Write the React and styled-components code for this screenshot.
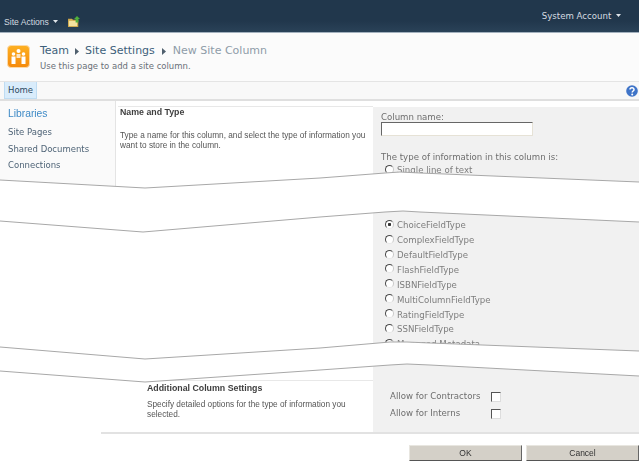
import React from 'react';
import styled, { createGlobalStyle } from 'styled-components';

const fieldTypes = [
  { label: 'External Data' },
  { label: 'ChoiceFieldType', checked: true },
  { label: 'ComplexFieldType' },
  { label: 'DefaultFieldType' },
  { label: 'FlashFieldType' },
  { label: 'ISBNFieldType' },
  { label: 'MultiColumnFieldType' },
  { label: 'RatingFieldType' },
  { label: 'SSNFieldType' },
  { label: 'Managed Metadata' },
];

const navLinks = ['Site Pages', 'Shared Documents', 'Connections'];

const tears = [
  {
    top: '0,180 145,188 320,178 385,173 400,172 420,173 639,182',
    bottom: '639,222 420,212 403,211 385,212 320,217 143,232 0,221',
  },
  {
    top: '0,347 145,359 320,348 390,342 407,342 430,343 639,351',
    bottom: '639,376 430,365 407,364 390,365 320,370 145,382 0,371',
  },
];

const App = () => (
  <Page>
    <GlobalStyle />
    <TopBar>
      <SiteActions>
        Site Actions <Caret />
        <FolderIcon />
      </SiteActions>
      <Account>
        System Account <Caret />
      </Account>
    </TopBar>

    <TitleRow>
      <TeamIcon />
      <div>
        <Breadcrumb>
          <a>Team</a>
          <Arrow />
          <a>Site Settings</a>
          <Arrow />
          <span>New Site Column</span>
        </Breadcrumb>
        <Subtitle>Use this page to add a site column.</Subtitle>
      </div>
    </TitleRow>

    <Ribbon>
      <HomeTab>Home</HomeTab>
      <HelpIcon />
    </Ribbon>

    <Section>
      <LeftPart>
        <Nav>
          <NavHeading>Libraries</NavHeading>
          {navLinks.map((link) => (
            <NavLink key={link}>{link}</NavLink>
          ))}
        </Nav>
        <Description>
          <h3>Name and Type</h3>
          <p>Type a name for this column, and select the type of information you want to store in the column.</p>
        </Description>
      </LeftPart>
      <Panel>
        <FieldLabel>Column name:</FieldLabel>
        <NameInput type="text" />
        <TypeLabel>The type of information in this column is:</TypeLabel>
        <RadioRow>
          <Radio type="radio" name="first" readOnly />
          Single line of text
        </RadioRow>
        <RadioList>
          {fieldTypes.map((type) => (
            <RadioRow key={type.label}>
              <Radio type="radio" name="type" defaultChecked={type.checked} />
              {type.label}
            </RadioRow>
          ))}
        </RadioList>
      </Panel>
    </Section>

    <LastSection>
      <SettingsText>
        <h3>Additional Column Settings</h3>
        <p>Specify detailed options for the type of information you selected.</p>
      </SettingsText>
      <SettingsPanel>
        <CheckRow>
          <span>Allow for Contractors</span>
          <Check type="checkbox" />
        </CheckRow>
        <CheckRow>
          <span>Allow for Interns</span>
          <Check type="checkbox" />
        </CheckRow>
      </SettingsPanel>
    </LastSection>

    <Footer>
      <FormButton>OK</FormButton>
      <FormButton>Cancel</FormButton>
    </Footer>

    <TearLayer viewBox="0 0 639 475">
      {tears.map((tear) => (
        <g key={tear.top}>
          <polygon points={`${tear.top} ${tear.bottom}`} fill="#fff" />
          <polyline points={tear.top} fill="none" stroke="#a8a8a8" />
          <polyline points={tear.bottom} fill="none" stroke="#a8a8a8" />
        </g>
      ))}
    </TearLayer>
  </Page>
);

const Caret = () => (
  <svg width="5" height="3" viewBox="0 0 5 3" style={{ marginLeft: 2, verticalAlign: 2 }}>
    <path d="M0 0h5L2.5 3z" fill="#dfe5ea" />
  </svg>
);

const Arrow = () => (
  <svg width="4" height="7" viewBox="0 0 4 7">
    <path d="M0 0l4 3.5L0 7z" fill="#50606e" />
  </svg>
);

const FolderIcon = () => (
  <FolderSvg width="12" height="11" viewBox="0 0 12 11">
    <path d="M0 3h4l1 1h5v7H0z" fill="#d9b65c" stroke="#b8963c" strokeWidth=".6" />
    <path d="M1 5h8v5H1z" fill="#f3e2a0" />
    <path d="M9 0l3 3h-1.600v3.500H7.600V3H6z" fill="#4fb03a" />
  </FolderSvg>
);

const TeamIcon = () => (
  <TeamSvg width="24" height="24" viewBox="0 0 24 24">
    <defs>
      <linearGradient id="team" x1="0" y1="0" x2="0" y2="1">
        <stop offset="0" stopColor="#fdb022" />
        <stop offset="1" stopColor="#f58a0c" />
      </linearGradient>
    </defs>
    <rect x=".5" y=".5" width="22" height="22" rx="3.500" fill="url(#team)" stroke="#fbd9a8" />
    <g fill="#fff">
      <circle cx="11.500" cy="6" r="2" />
      <circle cx="6.500" cy="9" r="1.800" />
      <circle cx="16.500" cy="9" r="1.800" />
      <path d="M9.500 9h4v4h-4z" opacity=".75" />
      <path d="M4.500 11.500h4V19h-4zM14.500 11.500h4V19h-4z" />
    </g>
  </TeamSvg>
);

const HelpIcon = () => (
  <HelpSvg width="12" height="12" viewBox="0 0 12 12">
    <circle cx="6" cy="6" r="5.800" fill="#3f74c8" />
    <path d="M4 4.500C4 2 8.200 2.300 8 4.700 7.900 6 6.200 6 6.200 7.500" fill="none" stroke="#fff" strokeWidth="1.500" />
    <circle cx="6.200" cy="9.400" r="1" fill="#fff" />
  </HelpSvg>
);

const GlobalStyle = createGlobalStyle`
  html, body {
    margin: 0;
    background: #fff;
  }
`;

const Page = styled.div`
  position: relative;
  width: 639px;
  height: 475px;
  overflow: hidden;
  font-family: "DejaVu Sans", Verdana, sans-serif;
  font-size: 8.600px;
  color: #6e6e6e;
  filter: blur(0.3px);
`;

const TopBar = styled.header`
  display: flex;
  justify-content: space-between;
  height: 32px;
  padding: 0 18px 0 4px;
  background: linear-gradient(#21374c 0, #21374c 21px, #2a4258 100%);
  border-bottom: 1px solid #a3b1be;
  color: #d5dbe0;
`;

const SiteActions = styled.div`
  align-self: flex-end;
  padding-bottom: 4px;
  font-family: "Liberation Sans", Arial, sans-serif;
  font-size: 8.600px;
  line-height: 11px;
`;

const FolderSvg = styled.svg`
  margin-left: 10px;
  vertical-align: -2px;
`;

const Account = styled.div`
  padding-top: 10px;
  line-height: 12px;
`;

const TitleRow = styled.div`
  display: flex;
  align-items: flex-start;
  gap: 9px;
  height: 48px;
  padding: 12px 0 0 7px;
  box-sizing: border-box;
  background: #fbfbfb;
`;

const TeamSvg = styled.svg`
  flex: none;
`;

const Breadcrumb = styled.div`
  display: flex;
  align-items: center;
  gap: 6px;
  font-size: 11px;
  line-height: 12px;
  color: #3d5f7a;

  a:last-of-type {
    margin-right: 1px;
  }

  span {
    margin-left: 1px;
    color: #8e9ca8;
  }
`;

const Subtitle = styled.div`
  margin-top: 4px;
  font-size: 8.500px;
  line-height: 11px;
  color: #6a7078;
`;

const Ribbon = styled.nav`
  display: flex;
  align-items: center;
  justify-content: space-between;
  height: 20px;
  padding: 0 1px 0 4px;
  box-sizing: border-box;
  background: #f8f8f8;
  border-top: 1px solid #e4e4e4;
  border-bottom: 2px solid #dfdfdf;
`;

const HomeTab = styled.div`
  align-self: stretch;
  padding: 0 3px;
  line-height: 17px;
  font-size: 8.500px;
  color: #2d4a62;
  background: #d9ecfb;
  border: 1px solid #bfdcf2;
  border-width: 0 1px 1px;
`;

const HelpSvg = styled.svg`
  flex: none;
`;

const Section = styled.section`
  display: grid;
  grid-template-columns: 373px 1fr;
  height: 279px;
`;

const LeftPart = styled.div`
  display: flex;
  align-items: flex-start;
`;

const Nav = styled.div`
  flex: none;
  width: 116px;
  height: 92px;
  padding: 6px 0 0 8px;
  box-sizing: border-box;
  background: #fafafa;
  border-right: 1px solid #e4e4e4;
`;

const NavHeading = styled.div`
  margin-bottom: 3px;
  font-family: "Liberation Sans", Arial, sans-serif;
  font-size: 10.300px;
  line-height: 14px;
  color: #3e8ac6;
`;

const NavLink = styled.div`
  font-size: 8.500px;
  line-height: 16.500px;
  color: #4f6477;
`;

const Description = styled.div`
  flex: 1;
  margin: 5px 0 0 2px;
  padding: 0 0 0 2px;
  border-top: 1px solid #e8e8e8;
  font-family: "Liberation Sans", Arial, sans-serif;
  font-size: 8.250px;
  line-height: 10px;
  color: #555;

  h3 {
    margin: 0 0 13px;
    font-size: 8.800px;
    line-height: 11px;
    font-weight: bold;
    color: #3f3f3f;
  }

  p {
    margin: 0;
  }
`;

const Panel = styled.div`
  margin-top: 6px;
  padding: 4px 0 0 8px;
  background: #f1f1f1;
`;

const FieldLabel = styled.div`
  line-height: 12px;
`;

const NameInput = styled.input`
  display: block;
  width: 152px;
  height: 14px;
  margin-top: -1px;
  padding: 0;
  box-sizing: border-box;
  background: #fff;
  border: 1px solid;
  border-color: #666 #e6e2d6 #e6e2d6 #666;
`;

const TypeLabel = styled.div`
  margin-top: 15px;
  line-height: 12px;
`;

const RadioList = styled.div`
  margin-top: 23px;
`;

const RadioRow = styled.label`
  display: flex;
  align-items: center;
  gap: 3px;
  height: 14.900px;
  margin-left: 4px;
  color: #7d7d7d;

  ${RadioList} &:first-child {
    margin-bottom: 2px;
  }
`;

const Radio = styled.input`
  appearance: none;
  flex: none;
  width: 9px;
  height: 9px;
  margin: -2px 0 0 0;
  border-radius: 50%;
  border: 1px solid;
  border-color: #4a4a4a #c8c8c8 #e8e8e8 #4a4a4a;
  background: #fff;

  &:checked {
    background: radial-gradient(circle, #333 0 1.300px, #fff 2px);
  }
`;

const LastSection = styled.section`
  display: grid;
  grid-template-columns: 272px 1fr;
  height: 54px;
  margin-left: 101px;
  border-bottom: 2px solid #e2e2e2;
  box-sizing: border-box;
`;

const SettingsText = styled(Description)`
  margin: 0 0 0 45px;
  padding: 2px 8px 0 1px;

  h3 {
    margin: 0 0 6px;
  }
`;

const SettingsPanel = styled.div`
  padding: 7px 0 0 17px;
  background: #f1f1f1;
`;

const CheckRow = styled.label`
  display: grid;
  grid-template-columns: 101px 10px;
  align-items: center;
  height: 17px;
`;

const Check = styled.input`
  appearance: none;
  width: 10px;
  height: 10px;
  margin: 3px 0 0;
  background: #fff;
  border: 1px solid;
  border-color: #555 #ddd #ddd #555;
`;

const Footer = styled.footer`
  display: flex;
  justify-content: flex-end;
  gap: 4px;
  padding-top: 11px;
`;

const FormButton = styled.button`
  width: 113px;
  height: 16px;
  padding: 0;
  box-sizing: border-box;
  background: #d4d0c8;
  border: 1px solid;
  border-color: #e8e6e0 #666 #555 #e8e6e0;
  font-family: "Liberation Sans", Arial, sans-serif;
  font-size: 8.500px;
  color: #333;
`;

const TearLayer = styled.svg`
  position: absolute;
  top: 0;
  left: 0;
  width: 639px;
  height: 475px;
  pointer-events: none;
`;

export default App;
